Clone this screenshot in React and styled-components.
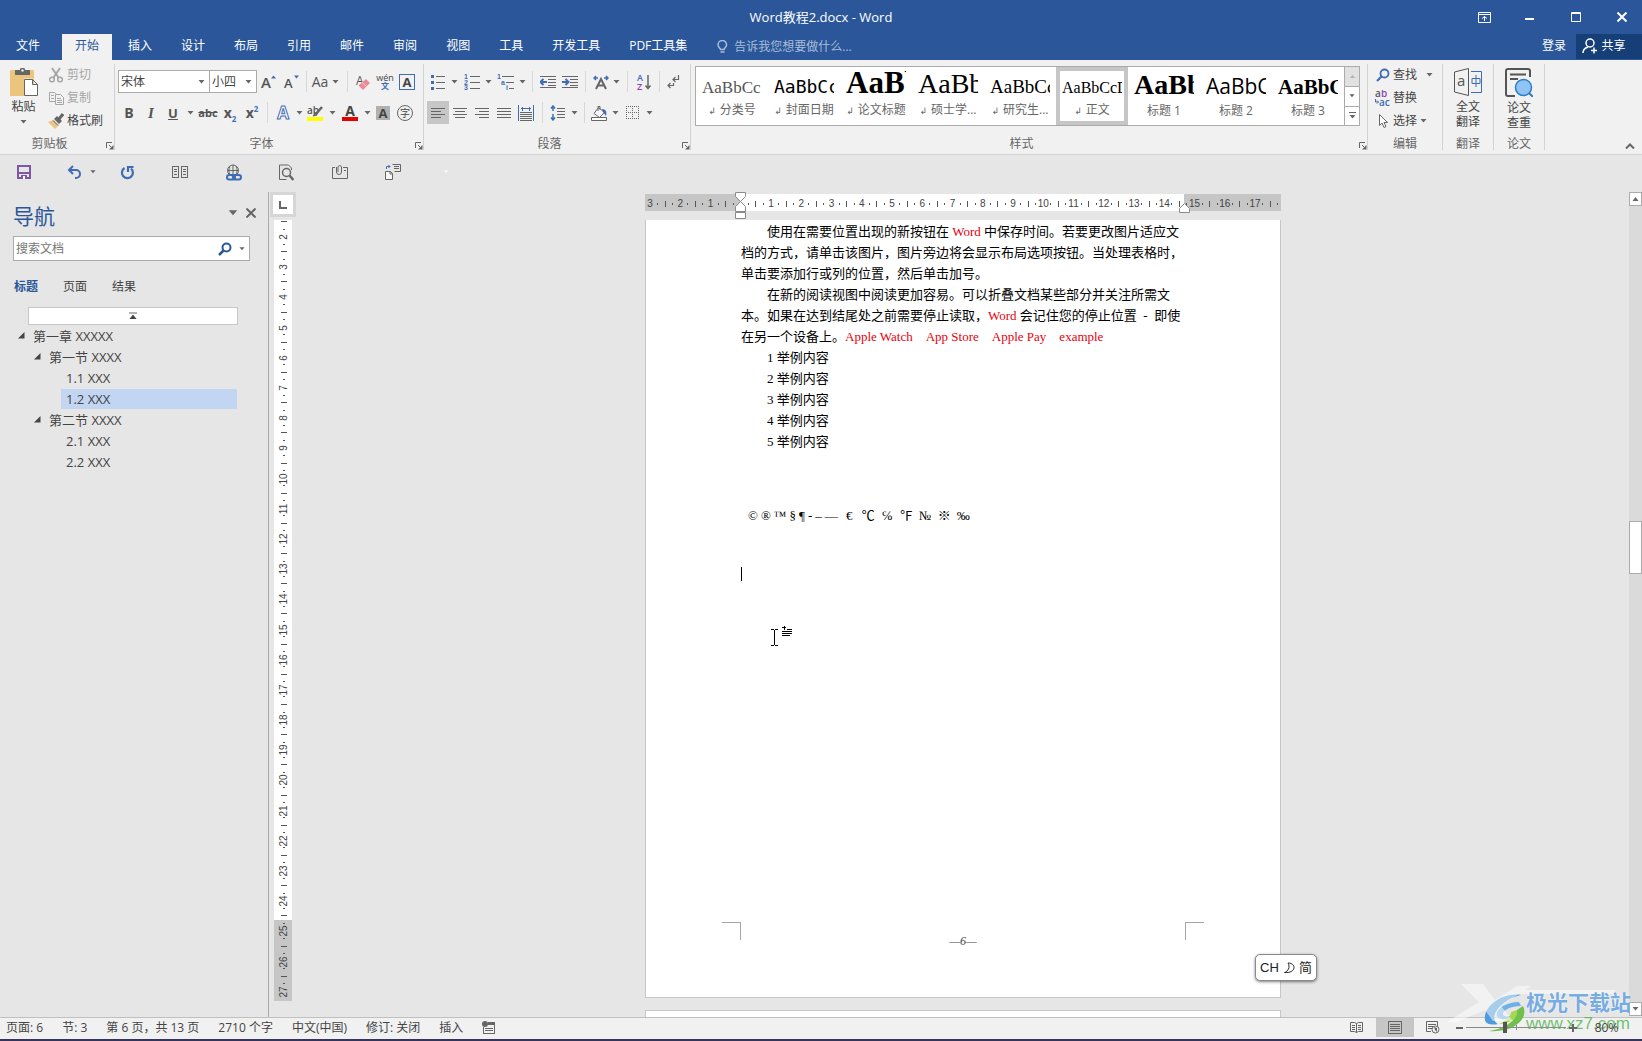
import React, { useState } from 'react';
import styled, { createGlobalStyle, css } from 'styled-components';

const GlobalStyle = createGlobalStyle`
  * {
    box-sizing: border-box;
  }
  body {
    margin: 0;
    background: #e6e6e6;
    color: #444444;
    font-family: 'Open Sans', 'Noto Sans CJK SC', sans-serif;
    font-size: 12px;
    line-height: 16px;
    overflow: hidden;
  }
  button, input, select {
    font: inherit;
    color: inherit;
    margin: 0;
  }
  svg {
    display: block;
    flex: none;
  }
`;

const Window = styled.div`
  display: flex;
  flex-direction: column;
  height: 100vh;
  position: relative;
  border-bottom: 2px solid #34345c;
`;

const PlainButton = styled.button`
  display: flex;
  align-items: center;
  justify-content: center;
  padding: 0;
  border: none;
  background: none;
  cursor: pointer;
  white-space: nowrap;
`;

/* ---------- title bar and tabs ---------- */

const TitleBar = styled.header`
  display: grid;
  grid-template-columns: 1fr auto 1fr;
  align-items: center;
  height: 34px;
  background: #2b579a;
  color: #ffffff;
`;

const Title = styled.h1`
  grid-column: 2;
  margin: 0;
  font-size: 13px;
  font-weight: 400;
`;

const WindowButtons = styled.div`
  display: flex;
  justify-content: flex-end;
`;

const WindowButton = styled(PlainButton)`
  width: 46px;
  height: 30px;

  &:last-child {
    width: 40px;
    margin-left: 3px;
  }
`;

const TabBar = styled.nav`
  display: flex;
  align-items: stretch;
  gap: 3px;
  height: 26px;
  background: #2b579a;
  color: #ffffff;
`;

const Tab = styled(PlainButton)`
  padding: 0 13px 3px;
  ${(p) => p.$file && css`
    padding: 0 19px 3px 16px;
  `}
  ${(p) => p.$account && css`
    padding: 0 7px 3px;
  `}
  ${(p) => p.$active && css`
    background: #f1f1f1;
    color: #2b579a;
  `}
`;

const TellMe = styled.label`
  display: flex;
  align-items: center;
  gap: 6px;
  flex: 1;
  padding-left: 14px;
  color: #a9bcd9;

  input {
    flex: 1;
    padding: 0;
    border: none;
    outline: none;
    background: none;
  }
  input::placeholder {
    color: #a9bcd9;
  }
`;

const ShareButton = styled(PlainButton)`
  gap: 3px;
  width: 66px;
  margin-bottom: 1px;
  padding: 0 10px 2px 0;
  background: #163f78;
`;

/* ---------- ribbon ---------- */

const Ribbon = styled.div`
  display: flex;
  height: 95px;
  background: #f1f1f1;
  border-bottom: 1px solid #d2d2d2;
`;

const Group = styled.section`
  display: flex;
  flex: none;
  flex-direction: column;
  position: relative;
  width: ${(p) => p.$w}px;
  padding: 0 4px 0 3px;

  &::after {
    content: '';
    position: absolute;
    right: 0;
    top: 4px;
    bottom: 4px;
    width: 1px;
    background: #d2d2d2;
  }
`;

const GroupBody = styled.div`
  display: flex;
  flex: 1;
  flex-direction: ${(p) => (p.$column ? 'column' : 'row')};
  gap: ${(p) => p.$gap || 0}px;
  padding-top: ${(p) => p.$top || 0}px;
`;

const GroupFooter = styled.div`
  display: flex;
  align-items: center;
  gap: 10px;
  height: 20px;
  text-align: center;
  color: #666666;
  white-space: nowrap;

  span {
    flex: 1;
  }
  svg {
    margin: 4px -3px 0 0;
  }
`;

const ToolRow = styled.div`
  display: flex;
  align-items: center;
  height: 23px;
`;

const Tool = styled(PlainButton)`
  width: ${(p) => p.$w || 22}px;
  height: 23px;
  font-size: ${(p) => p.$size || 15}px;
  background: ${(p) => (p.$active ? '#c6c6c6' : 'none')};

  &:hover {
    background: #d5e1f2;
  }
`;

const Divider = styled.span`
  width: ${(p) => p.$w || 10}px;
  height: 21px;
  background: linear-gradient(#d8d8d8, #d8d8d8) center / 1px 100% no-repeat;
`;

const ComboBox = styled.div`
  display: grid;
  align-items: center;
  width: ${(p) => p.$w}px;
  height: 23px;
  border: 1px solid #ababab;
  background: #ffffff;

  & + & {
    border-left: none;
  }
  select, svg {
    grid-area: 1 / 1;
  }
  select {
    width: 100%;
    padding: 0 2px;
    border: none;
    outline: none;
    appearance: none;
    background: none;
  }
  svg {
    justify-self: end;
    margin-right: 4px;
    pointer-events: none;
  }
`;

const BigButton = styled(PlainButton)`
  flex-direction: column;
  justify-content: flex-start;
  width: ${(p) => p.$w || 44}px;
  padding-top: 8px;
  line-height: 15px;
  white-space: normal;

  svg:first-child {
    margin-bottom: 3px;
  }
  span + svg {
    margin-top: 6px;
  }
`;

const CommandList = styled.div`
  display: flex;
  flex: 1;
  flex-direction: column;
  padding-top: 3px;
`;

const Command = styled(PlainButton)`
  justify-content: flex-start;
  gap: 3px;
  height: 23px;
  color: ${(p) => (p.disabled ? '#a6a6a6' : '#444444')};
`;

/* ---------- style gallery ---------- */

const Gallery = styled.div`
  display: flex;
  height: 60px;
  margin-left: 1px;
  border: 1px solid #ababab;
  background: #ffffff;
`;

const StyleCard = styled.button`
  width: 72px;
  height: 58px;
  padding: 6px 6px 5px;
  border: none;
  background: #ffffff;
  box-shadow: ${(p) => (p.$selected ? 'inset 0 0 0 4px #c6c6c6' : 'none')};
  text-align: center;
  color: #666666;
  line-height: 15px;
  white-space: nowrap;
  cursor: pointer;
`;

const Preview = styled.div`
  height: 28px;
  font-family: 'Liberation Serif', serif;
  font-size: 16px;
  line-height: 28px;
  text-align: left;
  color: #000000;
  overflow-x: clip;
`;

const Sample = styled.span`
  font-family: ${(p) => p.$font || "'Liberation Serif', serif"};
  font-size: ${(p) => p.$size}px;
  font-weight: ${(p) => (p.$bold ? 700 : 400)};
  color: ${(p) => p.$color || '#000000'};
  line-height: 1px;
`;

const ReturnMark = styled.span`
  margin-right: 4px;
  font-family: 'DejaVu Sans', sans-serif;
  font-size: 9px;
`;

const GalleryScroll = styled.div`
  display: grid;
  grid-template-rows: 1fr 1fr 1fr;
  width: 15px;
  border-left: 1px solid #ababab;
`;

const GalleryArrow = styled(PlainButton)`
  & + & {
    border-top: 1px solid #ababab;
  }
  &:disabled {
    background: #e1e1e1;
  }
`;

const Collapse = styled(PlainButton)`
  align-self: flex-end;
  margin-left: auto;
  width: 24px;
  height: 16px;
`;

/* ---------- quick access ---------- */

const QuickBar = styled.div`
  display: flex;
  align-items: center;
  height: 37px;
  padding-bottom: 3px;
`;

const QuickButton = styled(PlainButton)`
  gap: 9px;
  width: 53px;
  height: 24px;

  &:first-child {
    width: 48px;
  }
  &:nth-child(2) {
    padding-left: 14px;
  }
`;

/* ---------- navigation pane ---------- */

const Workspace = styled.main`
  display: flex;
  flex: 1;
  min-height: 0;
`;

const NavPane = styled.aside`
  display: flex;
  flex-direction: column;
  width: 269px;
  padding: 8px 18px 0 13px;
  border-right: 1px solid #ababab;
`;

const NavHeader = styled.div`
  display: flex;
  align-items: center;
  height: 32px;
  margin-right: -10px;

  h2 {
    flex: 1;
    margin: 0;
    font-size: 21px;
    font-weight: 400;
    color: #2b579a;
  }
  button {
    width: 18px;
    height: 18px;
    margin-bottom: 6px;
  }
`;

const SearchBox = styled.div`
  display: flex;
  align-items: center;
  gap: 7px;
  width: 237px;
  height: 25px;
  margin-top: 4px;
  padding: 0 4px 0 2px;
  border: 1px solid #ababab;
  background: #ffffff;

  input {
    flex: 1;
    min-width: 0;
    padding: 0;
    border: none;
    outline: none;
  }
  input::placeholder {
    color: #767676;
  }
`;

const NavTabs = styled.div`
  display: flex;
  gap: 25px;
  margin-top: 17px;
  padding-left: 1px;
`;

const NavTab = styled(PlainButton)`
  line-height: 18px;
  font-weight: ${(p) => (p.$active ? 700 : 400)};
  color: ${(p) => (p.$active ? '#2b579a' : '#444444')};
`;

const JumpTop = styled(PlainButton)`
  width: 210px;
  height: 18px;
  margin: 11px 0 0 15px;
  border: 1px solid #c6c6c6;
  background: #ffffff;
`;

const Tree = styled.ul`
  margin: 0;
  padding: 0;
  list-style: none;
  font-size: 13px;
`;

const TreeItem = styled.li`
  display: flex;
  align-items: center;
  height: 21px;
  padding-left: ${(p) => p.$level * 16 - 11}px;

  button {
    justify-content: flex-start;
    gap: 8px;
  }
`;

const LeafButton = styled(PlainButton)`
  flex: 1;
  height: 20px;
  margin: 0 13px 0 11px;
  padding-left: 5px;
  background: ${(p) => (p.$selected ? '#c2d5f2' : 'none')};
`;

/* ---------- rulers ---------- */

const SideRulerColumn = styled.div`
  display: flex;
  flex-direction: column;
  align-items: center;
  width: 28px;
  padding-bottom: 16px;
`;

const TabSelector = styled(PlainButton)`
  width: 26px;
  height: 25px;
  margin-bottom: 3px;
  border: 3px solid #d6d6d6;
  background: #ffffff;
`;

const rulerBase = css`
  display: flex;
  align-items: center;
  justify-content: space-between;
  font-family: 'Liberation Sans', sans-serif;
  font-size: 10px;
  line-height: 12px;
  color: #444444;
`;

const SideRuler = styled.div`
  ${rulerBase}
  flex: 1;
  flex-direction: column;
  width: 18px;
  padding: 2px 0 8px 1px;
  background: linear-gradient(#ffffff 700px, #c6c6c6 700px);
`;

const TopRuler = styled.div`
  ${rulerBase}
  position: relative;
  flex: none;
  width: 636px;
  height: 17px;
  margin: 2px 0 9px;
  padding: 2px 3px 0 5px;
  background: linear-gradient(90deg, #c6c6c6 95px, #ffffff 95px, #ffffff 539px, #c6c6c6 539px);
`;

const Mark = styled.span`
  display: flex;
  align-items: center;
  justify-content: center;
  width: 0;
  height: ${(p) => (p.$side ? '0' : '12px')};
  transform: ${(p) => (p.$side ? 'rotate(-90deg)' : 'none')};
`;

const Tick = styled.i`
  flex: none;
  width: 1px;
  height: ${(p) => (p.$half ? 6 : 2)}px;
  background: #555555;
`;

const IndentMarker = styled.span`
  position: absolute;
  left: 90px;
  top: -2px;
`;

const RightMarker = styled.span`
  position: absolute;
  left: 534px;
  top: 9px;
`;

/* ---------- document ---------- */

const Canvas = styled.div`
  display: flex;
  flex: 1;
  flex-direction: column;
  align-items: center;
  position: relative;
  overflow: hidden;
`;

const Page = styled.article`
  display: flex;
  flex: none;
  flex-direction: column;
  width: 636px;
  min-height: ${(p) => (p.$next ? 60 : 778)}px;
  border: 1px solid #c6c6c6;
  border-top-width: ${(p) => (p.$next ? 1 : 0)}px;
  background: #ffffff;
  color: #000000;
  font-family: 'Liberation Serif', 'Noto Sans CJK SC', serif;
  font-size: 13px;
  line-height: 21px;
  white-space: pre;

  & + & {
    margin-top: 12px;
  }
`;

const PageBody = styled.div`
  padding: 1px 95px 0;
`;

const Paragraph = styled.p`
  margin: 0;
  text-indent: 26px;
`;

const Red = styled.span`
  color: #e8000c;
`;

const Examples = styled.ul`
  margin: 0;
  padding: 0 0 0 26px;
  list-style: none;
`;

const Symbols = styled.div`
  display: flex;
  gap: ${(p) => (p.$wide ? 6 : 3)}px;

  span {
    min-width: ${(p) => (p.$wide ? 13 : 0)}px;
    text-align: center;
  }
`;

const SymbolLine = styled.div`
  display: flex;
  gap: 5px;
  margin-top: 53px;
  padding-left: 7px;
`;

const Caret = styled.div`
  width: 1px;
  height: 14px;
  margin-top: 41px;
  background: #000000;
`;

const PageFooter = styled.footer`
  display: flex;
  justify-content: space-between;
  margin-top: auto;
  padding: 0 76px 47px;
`;

const CropMark = styled.span`
  width: 19px;
  height: 18px;
  border-top: 1px solid #a6a6a6;
  border-left: ${(p) => (p.$right ? '1px solid #a6a6a6' : 'none')};
  border-right: ${(p) => (p.$right ? 'none' : '1px solid #a6a6a6')};
`;

const PageNumber = styled.span`
  padding-top: 10px;
  font-size: 12px;
  line-height: 18px;
  font-style: italic;
  color: #444444;
`;

const MousePointer = styled.div`
  position: absolute;
  left: 474px;
  top: 434px;
`;

const ScrollBar = styled.div`
  display: flex;
  flex-direction: column;
  width: 13px;
  margin-bottom: 1px;
  background: #dadada;
`;

const ScrollArrow = styled(PlainButton)`
  height: 14px;
  border: 1px solid #ababab;
  background: #ffffff;
`;

const ScrollThumb = styled.div`
  height: 53px;
  margin-top: 315px;
  margin-bottom: auto;
  border: 1px solid #ababab;
  background: #ffffff;
`;

/* ---------- status bar ---------- */

const StatusBar = styled.footer`
  display: flex;
  align-items: center;
  height: 22px;
  padding: 0 0 2px 6px;
  border-top: 1px solid #c0c0c0;
  background: #f1f1f1;
`;

const StatusItems = styled.div`
  display: flex;
  flex: 1;
  align-items: center;
  gap: 19px;
`;

const ViewButton = styled(PlainButton)`
  width: 38px;
  height: 19px;
  background: ${(p) => (p.$active ? '#c6c6c6' : 'none')};
`;

const ZoomControls = styled.div`
  display: flex;
  align-items: center;
  position: relative;
  z-index: 1;
`;

const ZoomStep = styled(PlainButton)`
  width: 14px;
  height: 20px;
`;

const ZoomSlider = styled.input`
  width: 100px;
  height: 16px;
  appearance: none;
  background: linear-gradient(#8a8a8a, #8a8a8a) center / 100% 1px no-repeat,
    linear-gradient(#8a8a8a, #8a8a8a) center / 1px 5px no-repeat;

  &::-webkit-slider-thumb {
    appearance: none;
    width: 4px;
    height: 11px;
    background: #555555;
  }
`;

const ZoomValue = styled(PlainButton)`
  width: 62px;
  height: 20px;
  padding-right: 9px;
`;

const ImeBadge = styled.div`
  position: absolute;
  right: 325px;
  bottom: 58px;
  display: flex;
  align-items: center;
  justify-content: center;
  gap: 4px;
  width: 62px;
  height: 27px;
  border: 1px solid #8a8a8a;
  border-radius: 5px;
  background: #ffffff;
  box-shadow: 0 1px 3px rgba(0, 0, 0, 0.5);
  color: #222222;
  font-family: 'Liberation Sans', 'Noto Sans CJK SC', sans-serif;
  font-size: 13px;
`;

const Watermark = styled.div`
  position: absolute;
  right: 11px;
  bottom: 5px;
  display: flex;
  align-items: flex-end;
  gap: 1px;
  pointer-events: none;
`;

const WatermarkGlow = styled.svg`
  position: absolute;
  right: 0;
  bottom: 12px;
`;

const WatermarkText = styled.div`
  position: relative;
  font-family: 'Noto Sans CJK SC', sans-serif;
  font-size: 21px;
  line-height: 26px;
  font-weight: 700;
  color: rgba(94, 158, 222, 0.85);
  text-shadow: 0 0 2px #ffffff;

  small {
    display: block;
    font-family: 'Liberation Sans', sans-serif;
    font-size: 17px;
    line-height: 20px;
    font-weight: 400;
    color: rgba(86, 184, 86, 0.85);
    text-shadow: none;
  }
`;

/* ---------- icons ---------- */

const GREY = '#666666';
const BLUE = '#3e6db5';

const Icon = ({ w = 16, h = 16, children, ...rest }) => (
  <svg width={w} height={h} viewBox={`0 0 ${w} ${h}`} fill="none" stroke={GREY} aria-hidden="true" {...rest}>
    {children}
  </svg>
);

const Down = ({ color = GREY, w = 7 }) => (
  <svg width={w} height={Math.round(w * 0.6)} viewBox="0 0 7 4" aria-hidden="true">
    <path d="M0.500 0h6L3.500 3.600z" fill={color} />
  </svg>
);

const Launcher = () => (
  <Icon w={8} h={8}>
    <path d="M0.500 6V0.500H6M3 3l3 3" />
    <path d="M7.500 3v4.500H3z" fill={GREY} stroke="none" />
  </Icon>
);

const Lines = ({ rows }) => (
  <Icon w={16} h={14} shapeRendering="crispEdges">
    {rows.map(([x1, x2], i) => (
      <path key={i} d={`M${x1} ${2.5 + i * 3}H${x2}`} />
    ))}
  </Icon>
);

const Glyph = styled.span`
  font-family: ${(p) => (p.$serif ? "'Liberation Serif', serif" : "'Open Sans', sans-serif")};
  font-weight: ${(p) => (p.$light ? 400 : 700)};
  font-style: ${(p) => (p.$italic ? 'italic' : 'normal')};
  text-decoration: ${(p) => p.$line || 'none'};
  font-size: ${(p) => p.$size || 14}px;
  line-height: 16px;
  color: #555555;

  sub, sup {
    font-size: 8px;
    line-height: 0;
    color: ${BLUE};
  }
`;

const FramedLetter = styled.span`
  width: 16px;
  height: 16px;
  border: 1px solid ${BLUE};
  font-size: 13px;
  line-height: 14px;
  font-weight: 700;
`;

const ShadedLetter = styled.span`
  width: 14px;
  height: 14px;
  background: #b0b0b0;
  font-size: 13px;
  line-height: 14px;
  font-weight: 700;
`;

const CircledCharacter = styled.span`
  width: 16px;
  height: 16px;
  border: 1px solid ${GREY};
  border-radius: 8px;
  font-size: 10px;
  line-height: 14px;
`;

const Pinyin = styled.span`
  font-size: 9px;
  line-height: 8px;

  b {
    display: block;
    color: ${BLUE};
    font-size: 8px;
  }
`;

const ColorLetter = styled.span`
  width: 16px;
  border-bottom: 4px solid ${(p) => p.$color};
  font-size: 14px;
  line-height: 13px;
  font-weight: 700;
`;

const OutlinedLetter = styled.span`
  color: #ffffff;
  font-size: 17px;
  font-weight: 700;
  -webkit-text-stroke: 1px ${BLUE};
`;

const PasteIcon = () => (
  <Icon w={28} h={28}>
    <rect x="0" y="2" width="24" height="26" rx="1" fill="#ecc57c" stroke="none" />
    <path d="M5 2h5a2.500 2.500 0 0 1 5 0h5v5H5z" fill="#666666" stroke="none" />
    <circle cx="12.500" cy="2.500" r="1.200" fill="#f1f1f1" stroke="none" />
    <path d="M14 10.500h9v17h-9z" fill="#f1f1f1" stroke="none" />
    <path d="M14.500 11.500h8l5 5v11h-13zM22.500 11.500v5h5" fill="#ffffff" />
  </Icon>
);

const CutIcon = () => (
  <Icon stroke="#a6a6a6" strokeWidth="1.500">
    <path d="M4 1l6.500 9.500M12 1L5.500 10.500" strokeWidth="2" />
    <circle cx="4" cy="12.500" r="2.300" />
    <circle cx="12" cy="12.500" r="2.300" />
  </Icon>
);

const CopyIcon = () => (
  <Icon stroke="#a6a6a6">
    <path d="M7 11.500H1.500v-9h5l2 2M3 5.500h3M3 8.500h3" />
    <path d="M7.500 4.500h5l3 3v7h-8zM9 8.500h4M9 10.500h5M9 12.500h5" fill="#f1f1f1" />
  </Icon>
);

const BrushIcon = () => (
  <Icon>
    <path d="M0 9l6-2 5 5-4 4z" fill="#ecc57c" stroke="none" />
    <path d="M6 6l3-3 5 5-3 3z" fill="#666666" stroke="none" />
    <path d="M11 6l4-5" strokeWidth="3" />
    <path d="M5 7.500l5 5" stroke="#4472b5" />
  </Icon>
);

const LetterSize = ({ up }) => (
  <Icon w={18} h={16}>
    <text x="1" y="14" fontSize={up ? 15 : 13} fontWeight="600" fontFamily="Open Sans" fill="#555555" stroke="none">A</text>
    <path d={up ? 'M11 4.500h5L13.500 1.500z' : 'M11 1.500h5L13.500 4.500z'} fill={BLUE} stroke="none" />
  </Icon>
);

const EraserIcon = () => (
  <Icon>
    <text x="1" y="11" fontSize="12" fontFamily="Open Sans" fill="#555555" stroke="none">A</text>
    <path d="M3.500 11.500l7.500-6.500 4 4-7 7z" fill="#e98b97" stroke="none" />
    <path d="M7 8.500l4.500 4" stroke="#f7cdd2" />
  </Icon>
);

const HighlightIcon = () => (
  <Icon>
    <text x="0" y="9" fontSize="10" fontWeight="600" fontFamily="Open Sans" fill="#555555" stroke="none">ab</text>
    <path d="M15 2L8 10" strokeWidth="2.500" />
    <path d="M9 7l-3 4 4-1z" fill={GREY} />
    <path d="M0 12h16v4H0z" fill="#ffff00" stroke="none" />
  </Icon>
);

const BulletsIcon = () => (
  <Icon shapeRendering="crispEdges">
    <path d="M6 2.500h9M6 8.500h9M6 14.500h9" />
    <path d="M1 1h3v3H1zM1 7h3v3H1zM1 13h3v3H1z" fill={BLUE} stroke="none" />
  </Icon>
);

const NumberingIcon = () => (
  <Icon>
    <path d="M6 2.500h10M6 8.500h10M6 14.500h10" shapeRendering="crispEdges" />
    <g fill={BLUE} stroke="none" fontSize="7" fontWeight="700" fontFamily="Liberation Sans">
      <text x="0" y="5">1</text>
      <text x="0" y="11">2</text>
      <text x="0" y="16">3</text>
    </g>
  </Icon>
);

const MultilevelIcon = () => (
  <Icon w={17}>
    <path d="M5 2.500h12M9 8.500h8M12 14.500h5" shapeRendering="crispEdges" />
    <g fill={BLUE} stroke="none" fontSize="7" fontWeight="700" fontFamily="Liberation Sans">
      <text x="0" y="5">1</text>
      <text x="4" y="11">a</text>
      <text x="9" y="16">i</text>
    </g>
  </Icon>
);

const IndentIcon = ({ right }) => (
  <Icon>
    <path d="M0 2.500h16M8 5.500h8M8 8.500h8M8 11.500h8M0 13.500h16" shapeRendering="crispEdges" />
    <path d={right ? 'M0 8h6M3.500 5L6.500 8l-3 3' : 'M7 8H1M3.500 5L0.500 8l3 3'} stroke={BLUE} strokeWidth="2" />
  </Icon>
);

const AsianLayoutIcon = () => (
  <Icon>
    <path d="M3 15L8 5l5 10M5 11.500h6" strokeWidth="2" />
    <path d="M5 4H1M3 2L1 4l2 2M11 4h4M13 2l2 2-2 2" stroke={BLUE} strokeWidth="1.500" />
  </Icon>
);

const SortIcon = () => (
  <Icon>
    <g stroke="none" fontSize="9" fontWeight="600" fontFamily="Open Sans">
      <text x="1" y="7" fill={BLUE}>A</text>
      <text x="1" y="16" fill="#8e44ad">Z</text>
    </g>
    <path d="M12 1v13M9.500 11.500L12 14.500l2.500-3" strokeWidth="1.500" />
  </Icon>
);

const MarksIcon = () => (
  <Icon w={14} h={14}>
    <path d="M11.500 0v4.500H6M8.500 2L6 4.500 8.500 7" strokeWidth="1.200" />
    <path d="M6.500 8v2.500H1M3.500 8L1 10.500 3.500 13" strokeWidth="1.200" />
  </Icon>
);

const DistributeIcon = () => (
  <Icon shapeRendering="crispEdges">
    <path d="M0.500 0v16M15.500 0v16M3 3.500h10M4.500 1.500v4M11.500 1.500v4" stroke={BLUE} />
    <path d="M2 7.500h12M2 9.500h12M2 11.500h12M2 13.500h12M2 15.500h12" />
  </Icon>
);

const SpacingIcon = () => (
  <Icon>
    <path d="M7 3.500h8M7 6.500h8M7 9.500h8M7 12.500h8" shapeRendering="crispEdges" />
    <path d="M3 1v5M1 3.500L3 1l2 2.500M3 9v6M1 12.500L3 15l2-2.500" stroke={BLUE} strokeWidth="1.500" />
  </Icon>
);

const BucketIcon = () => (
  <Icon>
    <path d="M7.500 2.500l6 5-5 5-5.500-4zM7 6V1.500h2V5" fill="#f7f7f7" />
    <path d="M11 4c4 0 5 3 4 7l-3-4z" fill={BLUE} stroke="none" />
    <path d="M0.500 12.500h15v3H0.500z" fill="#ffffff" />
  </Icon>
);

const BordersIcon = () => (
  <Icon w={14} h={14} strokeDasharray="1 1" shapeRendering="crispEdges">
    <path d="M0 0.500h13M0 6.500h13M0 12.500h13M0.500 0v13M6.500 0v13M12.500 0v13" />
  </Icon>
);

const Magnifier = ({ size = 14, color = '#2b579a' }) => (
  <svg width={size} height={size} viewBox="0 0 14 14" fill="none" stroke={color} strokeWidth="2" aria-hidden="true">
    <circle cx="8.500" cy="5.500" r="4" />
    <path d="M5.500 8.500L1 13" strokeWidth="2.500" />
  </svg>
);

const FindIcon = () => (
  <Icon w={19} stroke={BLUE}>
    <circle cx="13.500" cy="6.500" r="4" strokeWidth="1.800" />
    <path d="M10.500 9.500L6 14" strokeWidth="2.200" />
  </Icon>
);

const ReplaceIcon = () => (
  <Icon w={19} stroke="none" fontFamily="Open Sans" fontSize="10" fontWeight="600">
    <text x="4" y="7" fill="#555555">a</text>
    <text x="10" y="7" fill="#8e44ad">b</text>
    <text x="8" y="16" fill={BLUE}>ac</text>
    <path d="M4.500 9v3h3M6 10.500L7.500 12 6 13.500" stroke={BLUE} fill="none" />
  </Icon>
);

const SelectIcon = () => (
  <Icon w={19}>
    <path d="M8.500 1.500v11l2.500-2.500 2 4.500 2-1-2-4h3.500z" fill="#ffffff" />
  </Icon>
);

const TranslateIcon = () => (
  <Icon w={28} h={28}>
    <path d="M0.500 4L14.500 0.500v27L0.500 24z" stroke="#555555" />
    <path d="M17 3.500h10.500V24.500H17M18 10.500h8v5h-8zM22 7v12" stroke={BLUE} />
    <text x="3" y="18" fontSize="15" fontFamily="Open Sans" fill="#555555" stroke="none">a</text>
  </Icon>
);

const ThesisIcon = () => (
  <Icon w={28} h={29}>
    <path d="M10 28H3a2 2 0 0 1-2-2V3a2 2 0 0 1 2-2h20a2 2 0 0 1 2 2v6M5 6.500h16M5 11h8" stroke="#555555" strokeWidth="2" />
    <circle cx="18.500" cy="19.500" r="8" fill="#8fc5f4" stroke="#2e7cc2" strokeWidth="1.500" />
    <path d="M24 25l4 4" stroke="#2e7cc2" strokeWidth="2" />
  </Icon>
);

const quickItems = [
  {
    name: '保存',
    icon: (
      <Icon w={14} h={14} stroke="#7e57a5" strokeWidth="2">
        <path d="M1 1h12v12H1zM1 8h12" />
        <path d="M4 10h6v4H4z" fill="#7e57a5" stroke="none" />
        <path d="M6 11h2v3H6z" fill="#ffffff" stroke="none" />
      </Icon>
    ),
  },
  {
    name: '撤消',
    menu: true,
    icon: (
      <Icon w={14} h={14} stroke={BLUE} strokeWidth="2">
        <path d="M2 5h7a3.800 3.800 0 0 1 0 8H8M6 1L2 5l4 4" />
      </Icon>
    ),
  },
  {
    name: '重复',
    icon: (
      <Icon w={15} h={15} stroke={BLUE} strokeWidth="2.200">
        <path d="M4.500 3A5.500 5.500 0 1 0 11 3.500" />
        <path d="M8 7V2h5.500" />
      </Icon>
    ),
  },
  {
    name: '并排',
    icon: (
      <Icon w={17} h={12} shapeRendering="crispEdges">
        <path d="M0.500 0.500h6v11h-6zM9.500 0.500h6v11h-6zM2 3.500h3M2 5.500h3M2 8.500h3M11 3.500h3M11 5.500h3M11 8.500h3" />
      </Icon>
    ),
  },
  {
    name: '超链接',
    icon: (
      <Icon w={16} h={17}>
        <circle cx="7" cy="6.500" r="5.500" />
        <path d="M7 1v9M1.500 6.500h11M4 2.500c-1.500 3-1.500 5 0 8M10 2.500c1.500 3 1.500 5 0 8" />
        <rect x="1" y="11" width="8" height="4.500" rx="2.200" stroke={BLUE} strokeWidth="2" />
        <rect x="7" y="11" width="8" height="4.500" rx="2.200" stroke={BLUE} strokeWidth="2" />
      </Icon>
    ),
  },
  {
    name: '打印预览',
    icon: (
      <Icon w={15} h={17}>
        <path d="M12.500 6V4l-3-3h-9v14.500h7" />
        <circle cx="7.500" cy="8.500" r="4" strokeWidth="1.500" />
        <path d="M10.500 11.500l4 4.500" strokeWidth="2.500" />
      </Icon>
    ),
  },
  {
    name: '附件',
    icon: (
      <Icon w={16} h={16}>
        <path d="M3 3.500H0.500v11h15v-11H11M12 6.500h2" />
        <path d="M4.500 3v5a2.500 2.500 0 0 0 5 0V3a1.800 1.800 0 0 0-3.500 0v5" />
      </Icon>
    ),
  },
  {
    name: '转换',
    icon: (
      <Icon w={16} h={16}>
        <path d="M0.500 7.500h5l2 2v6h-7zM5 7.500v2.500h2.500" fill="#f7f7f7" />
        <path d="M7.500 0.500h8v7h-6M9 2.500h5M9 4.500h5" />
        <path d="M1.500 5V2.500H5M3.500 1L5 2.500 3.500 4" stroke={BLUE} />
      </Icon>
    ),
  },
];

/* ---------- data ---------- */

const tabs = ['开始', '插入', '设计', '布局', '引用', '邮件', '审阅', '视图', '工具', '开发工具', 'PDF工具集'];

const styleCards = [
  { name: '分类号', sample: 'AaBbCc', size: 17, mark: true, color: '#555555' },
  { name: '封面日期', sample: 'AaBbCc', size: 18, mark: true, font: "'DejaVu Sans Mono', monospace" },
  { name: '论文标题', sample: 'AaBb', size: 31, mark: true, bold: true },
  { name: '硕士学...', sample: 'AaBb', size: 28, mark: true },
  { name: '研究生...', sample: 'AaBbCc', size: 19, mark: true },
  { name: '正文', sample: 'AaBbCcD', size: 16, mark: true },
  { name: '标题 1', sample: 'AaBb', size: 28, bold: true },
  { name: '标题 2', sample: 'AaBbC', size: 21, font: "'Open Sans', sans-serif" },
  { name: '标题 3', sample: 'AaBbC', size: 21, bold: true },
];

const headings = [
  { level: 1, text: '第一章 XXXXX' },
  { level: 2, text: '第一节 XXXX' },
  { level: 3, text: '1.1 XXX' },
  { level: 3, text: '1.2 XXX' },
  { level: 2, text: '第二节 XXXX' },
  { level: 3, text: '2.1 XXX' },
  { level: 3, text: '2.2 XXX' },
];

const examples = [1, 2, 3, 4, 5];

// Quarter-unit marks: a number, a dot, a half tick, a dot
const rulerMarks = (from, to) => {
  const marks = [];
  for (let q = from * 4; q <= to * 4; q += 1) {
    if (q % 4 === 0) marks.push({ q, label: q === 0 ? '' : String(Math.abs(q / 4)) });
    else marks.push({ q, half: q % 2 === 0 });
  }
  return marks;
};

const Scale = ({ from, to, side }) =>
  rulerMarks(from, to).map((m) => (
    <Mark key={m.q} $side={side}>
      {m.label === undefined ? <Tick $half={m.half} /> : m.label}
    </Mark>
  ));

function App() {
  const [activeTab, setActiveTab] = useState('开始');
  const [style, setStyle] = useState('正文');
  const [heading, setHeading] = useState('1.2 XXX');
  const [zoom, setZoom] = useState(39);

  return (
    <Window>
      <GlobalStyle />
      <TitleBar>
        <Title>Word教程2.docx - Word</Title>
        <WindowButtons>
          <WindowButton aria-label="功能区显示选项">
            <Icon w={13} h={11} stroke="#ffffff">
              <path d="M0.500 0.500h12v10h-12zM0.500 2.500h12M6.500 9V4.500M4 6.500l2.500-2 2.500 2" />
            </Icon>
          </WindowButton>
          <WindowButton aria-label="最小化">
            <Icon w={10} h={10} stroke="#ffffff"><path d="M0 7h9" strokeWidth="2" /></Icon>
          </WindowButton>
          <WindowButton aria-label="最大化">
            <Icon w={10} h={10} stroke="#ffffff"><path d="M0.500 0.500h9v9h-9zM0 1.500h10" /></Icon>
          </WindowButton>
          <WindowButton aria-label="关闭">
            <Icon w={10} h={10} stroke="#ffffff" strokeWidth="2"><path d="M0.500 0.500l9 9M9.500 0.500l-9 9" /></Icon>
          </WindowButton>
        </WindowButtons>
      </TitleBar>

      <TabBar>
        <Tab $file>文件</Tab>
        {tabs.map((t) => (
          <Tab key={t} $active={t === activeTab} onClick={() => setActiveTab(t)}>{t}</Tab>
        ))}
        <TellMe>
          <Icon w={11} h={14} stroke="#a9bcd9" strokeWidth="1.500">
            <path d="M3.500 9.500C3.500 8 1 7.500 1 4.800a4.300 4.300 0 0 1 8.600 0C9.600 7.500 7 8 7 9.500zM3.500 12h4" />
          </Icon>
          <input placeholder="告诉我您想要做什么..." aria-label="告诉我您想要做什么" />
        </TellMe>
        <Tab $account>登录</Tab>
        <ShareButton>
          <Icon w={16} h={16} stroke="#ffffff" strokeWidth="1.500">
            <circle cx="8" cy="5" r="4" />
            <path d="M1 15c0-3 2-5 5-6M9 12.500h6M12 9.500v6" />
          </Icon>
          共享
        </ShareButton>
      </TabBar>

      <Ribbon>
        <Group $w={115}>
          <GroupBody $gap={4}>
            <BigButton $w={41}><PasteIcon /><span>粘贴</span><Down /></BigButton>
            <CommandList>
              <Command disabled><CutIcon />剪切</Command>
              <Command disabled><CopyIcon />复制</Command>
              <Command><BrushIcon />格式刷</Command>
            </CommandList>
          </GroupBody>
          <GroupFooter><span>剪贴板</span><Launcher /></GroupFooter>
        </Group>

        <Group $w={309}>
          <GroupBody $column $gap={8} $top={10}>
            <ToolRow>
              <ComboBox $w={92}>
                <select aria-label="字体"><option>宋体</option></select>
                <Down />
              </ComboBox>
              <ComboBox $w={47}>
                <select aria-label="字号"><option>小四</option></select>
                <Down />
              </ComboBox>
              <Tool $w={24} aria-label="增大字号"><LetterSize up /></Tool>
              <Tool $w={22} aria-label="减小字号"><LetterSize /></Tool>
              <Divider $w={6} />
              <Tool $w={33}><Glyph $light $size={14}>Aa</Glyph>&nbsp;<Down /></Tool>
              <Divider />
              <Tool aria-label="清除格式"><EraserIcon /></Tool>
              <Tool aria-label="拼音指南"><Pinyin>wén<b>文</b></Pinyin></Tool>
              <Tool aria-label="字符边框"><FramedLetter>A</FramedLetter></Tool>
            </ToolRow>
            <ToolRow>
              <Tool><Glyph>B</Glyph></Tool>
              <Tool><Glyph $serif $italic $size={15}>I</Glyph></Tool>
              <Tool><Glyph $line="underline" $size={13}>U</Glyph></Tool>
              <Tool $w={13} aria-label="下划线"><Down /></Tool>
              <Tool><Glyph $line="line-through" $size={11}>abc</Glyph></Tool>
              <Tool><Glyph>x<sub>2</sub></Glyph></Tool>
              <Tool><Glyph>x<sup>2</sup></Glyph></Tool>
              <Divider $w={9} />
              <Tool><OutlinedLetter>A</OutlinedLetter></Tool>
              <Tool $w={10} aria-label="文本效果"><Down /></Tool>
              <Tool aria-label="突出显示"><HighlightIcon /></Tool>
              <Tool $w={12} aria-label="突出显示颜色"><Down /></Tool>
              <Tool $w={24}><ColorLetter $color="#e60000">A</ColorLetter></Tool>
              <Tool $w={10} aria-label="字体颜色"><Down /></Tool>
              <Tool><ShadedLetter>A</ShadedLetter></Tool>
              <Tool><CircledCharacter>字</CircledCharacter></Tool>
            </ToolRow>
          </GroupBody>
          <GroupFooter><span>字体</span><Launcher /></GroupFooter>
        </Group>

        <Group $w={267}>
          <GroupBody $column $gap={8} $top={10}>
            <ToolRow>
              <Tool aria-label="项目符号"><BulletsIcon /></Tool>
              <Tool $w={11} aria-label="项目符号库"><Down /></Tool>
              <Tool $w={23} aria-label="编号"><NumberingIcon /></Tool>
              <Tool $w={11} aria-label="编号库"><Down /></Tool>
              <Tool $w={23} aria-label="多级列表"><MultilevelIcon /></Tool>
              <Tool $w={10} aria-label="列表库"><Down /></Tool>
              <Divider />
              <Tool aria-label="减少缩进量"><IndentIcon /></Tool>
              <Tool aria-label="增加缩进量"><IndentIcon right /></Tool>
              <Divider $w={9} />
              <Tool aria-label="中文版式"><AsianLayoutIcon /></Tool>
              <Tool $w={9} aria-label="中文版式选项"><Down /></Tool>
              <Divider $w={12} />
              <Tool aria-label="排序"><SortIcon /></Tool>
              <Divider $w={8} />
              <Tool aria-label="显示编辑标记"><MarksIcon /></Tool>
            </ToolRow>
            <ToolRow>
              <Tool $active aria-label="左对齐"><Lines rows={[[1, 15], [1, 11], [1, 15], [1, 11]]} /></Tool>
              <Tool aria-label="居中"><Lines rows={[[1, 15], [3, 13], [1, 15], [3, 13]]} /></Tool>
              <Tool aria-label="右对齐"><Lines rows={[[1, 15], [5, 15], [1, 15], [5, 15]]} /></Tool>
              <Tool aria-label="两端对齐"><Lines rows={[[1, 15], [1, 15], [1, 15], [1, 15]]} /></Tool>
              <Tool aria-label="分散对齐"><DistributeIcon /></Tool>
              <Divider />
              <Tool aria-label="行距"><SpacingIcon /></Tool>
              <Tool $w={11} aria-label="行距选项"><Down /></Tool>
              <Divider $w={8} />
              <Tool aria-label="底纹"><BucketIcon /></Tool>
              <Tool $w={11} aria-label="底纹颜色"><Down /></Tool>
              <Tool $w={23} aria-label="边框"><BordersIcon /></Tool>
              <Tool $w={11} aria-label="边框选项"><Down /></Tool>
            </ToolRow>
          </GroupBody>
          <GroupFooter><span>段落</span><Launcher /></GroupFooter>
        </Group>

        <Group $w={677}>
          <GroupBody $top={6}>
            <Gallery>
              {styleCards.map((s) => (
                <StyleCard key={s.name} $selected={s.name === style} onClick={() => setStyle(s.name)}>
                  <Preview>
                    <Sample $font={s.font} $size={s.size} $bold={s.bold} $color={s.color}>{s.sample}</Sample>
                  </Preview>
                  {s.mark && <ReturnMark>↲</ReturnMark>}
                  {s.name}
                </StyleCard>
              ))}
              <GalleryScroll>
                <GalleryArrow disabled aria-label="上一行"><Icon w={5} h={3} stroke="none"><path d="M0 3h5L2.500 0z" fill="#b0b0b0" /></Icon></GalleryArrow>
                <GalleryArrow aria-label="下一行"><Down w={6} /></GalleryArrow>
                <GalleryArrow aria-label="其他"><Icon w={7} h={7}><path d="M0 0.500h7" /><path d="M0.500 3h6L3.500 6.500z" fill={GREY} stroke="none" /></Icon></GalleryArrow>
              </GalleryScroll>
            </Gallery>
          </GroupBody>
          <GroupFooter><span>样式</span><Launcher /></GroupFooter>
        </Group>

        <Group $w={75}>
          <CommandList>
            <Command><FindIcon />查找&nbsp;&nbsp;<Down /></Command>
            <Command><ReplaceIcon />替换</Command>
            <Command><SelectIcon />选择<Down /></Command>
          </CommandList>
          <GroupFooter><span>编辑</span></GroupFooter>
        </Group>

        <Group $w={51}>
          <GroupBody>
            <BigButton><TranslateIcon /><span>全文<br />翻译</span></BigButton>
          </GroupBody>
          <GroupFooter><span>翻译</span></GroupFooter>
        </Group>

        <Group $w={51}>
          <GroupBody>
            <BigButton><ThesisIcon /><span>论文<br />查重</span></BigButton>
          </GroupBody>
          <GroupFooter><span>论文</span></GroupFooter>
        </Group>

        <Collapse aria-label="折叠功能区">
          <Icon w={10} h={6} strokeWidth="2"><path d="M1 5.500l4-4 4 4" /></Icon>
        </Collapse>
      </Ribbon>

      <QuickBar>
        {quickItems.map((q) => (
          <QuickButton key={q.name} aria-label={q.name}>
            {q.icon}
            {q.menu && <Down w={6} />}
          </QuickButton>
        ))}
        <QuickButton aria-label="自定义快速访问工具栏"><Down w={6} color="#f7f7f7" /></QuickButton>
      </QuickBar>

      <Workspace>
        <NavPane>
          <NavHeader>
            <h2>导航</h2>
            <PlainButton aria-label="任务窗格选项"><Down w={10} /></PlainButton>
            <PlainButton aria-label="关闭导航"><Icon w={10} h={10} strokeWidth="2"><path d="M0.500 0.500l9 9M9.500 0.500l-9 9" /></Icon></PlainButton>
          </NavHeader>
          <SearchBox>
            <input placeholder="搜索文档" aria-label="搜索文档" />
            <PlainButton aria-label="搜索"><Magnifier /></PlainButton>
            <PlainButton aria-label="搜索选项"><Down w={6} /></PlainButton>
          </SearchBox>
          <NavTabs>
            <NavTab $active>标题</NavTab>
            <NavTab>页面</NavTab>
            <NavTab>结果</NavTab>
          </NavTabs>
          <JumpTop aria-label="跳转到开头">
            <Icon w={8} h={8}><path d="M0 1h8" /><path d="M0.500 7h7L4 2.500z" fill="#444444" stroke="none" /></Icon>
          </JumpTop>
          <Tree>
            {headings.map((h) => (
              <TreeItem key={h.text} $level={h.level}>
                {h.level < 3 ? (
                  <PlainButton>
                    <Icon w={7} h={7}><path d="M6.500 0v6.500H0z" fill="#444444" stroke="none" /></Icon>
                    {h.text}
                  </PlainButton>
                ) : (
                  <LeafButton $selected={h.text === heading} onClick={() => setHeading(h.text)}>{h.text}</LeafButton>
                )}
              </TreeItem>
            ))}
          </Tree>
        </NavPane>

        <SideRulerColumn>
          <TabSelector aria-label="制表符">
            <Icon w={8} h={8} strokeWidth="2"><path d="M1 0v7h7" /></Icon>
          </TabSelector>
          <SideRuler><Scale from={1.5} to={27} side /></SideRuler>
        </SideRulerColumn>

        <Canvas>
          <TopRuler>
            <Scale from={-3} to={17.75} />
            <IndentMarker>
              <Icon w={12} h={28} stroke="#8a8a8a">
                <path d="M0.500 0.500h10v4l-5 5-5-5zM5.500 9.500l5 5v5H0.500v-5zM0.500 20.500h10v6H0.500z" fill="#ffffff" />
              </Icon>
            </IndentMarker>
            <RightMarker>
              <Icon w={12} h={11} stroke="#8a8a8a"><path d="M5.500 0.500l5 5v4H0.500v-4z" fill="#ffffff" /></Icon>
            </RightMarker>
          </TopRuler>
          <Page>
            <PageBody>
              <Paragraph>
                使用在需要位置出现的新按钮在 <Red>Word</Red> 中保存时间。若要更改图片适应文<br />
                档的方式，请单击该图片，图片旁边将会显示布局选项按钮。当处理表格时，<br />
                单击要添加行或列的位置，然后单击加号。
              </Paragraph>
              <Paragraph>
                在新的阅读视图中阅读更加容易。可以折叠文档某些部分并关注所需文<br />
                本。如果在达到结尾处之前需要停止读取，<Red>Word</Red> 会记住您的停止位置{'  -  '}即使<br />
                在另一个设备上。<Red>Apple Watch{'\u3000'}App Store{'\u3000'}Apple Pay{'\u3000'}example</Red>
              </Paragraph>
              <Examples>
                {examples.map((n) => <li key={n}>{n} 举例内容</li>)}
              </Examples>
              <SymbolLine>
                <Symbols>
                  {['©', '®', '™', '§', '¶', '-', '–', '—'].map((s) => <span key={s}>{s}</span>)}
                </Symbols>
                <Symbols $wide>
                  {['€', '℃', '℅', '℉', '№', '※', '‰'].map((s) => <span key={s}>{s}</span>)}
                </Symbols>
              </SymbolLine>
              <Caret />
            </PageBody>
            <PageFooter>
              <CropMark />
              <PageNumber>—6—</PageNumber>
              <CropMark $right />
            </PageFooter>
          </Page>
          <Page $next />
          <MousePointer>
            <Icon w={24} h={22} stroke="#000000" shapeRendering="crispEdges">
              <path d="M0 3.500h3M4 3.500h3M3.500 4v15M0 19.500h3M4 19.500h3M13 0v4M11 1.500h4M16 3.500h5M11 5.500h10M11 7.500h10M11 9.500h8" />
            </Icon>
          </MousePointer>
        </Canvas>

        <ScrollBar>
          <ScrollArrow aria-label="向上滚动"><Icon w={7} h={4} stroke="none"><path d="M0.500 4h6L3.500 0z" fill={GREY} /></Icon></ScrollArrow>
          <ScrollThumb />
          <ScrollArrow aria-label="向下滚动"><Down /></ScrollArrow>
        </ScrollBar>
      </Workspace>

      <StatusBar>
        <StatusItems>
          <span>页面: 6</span>
          <span>节: 3</span>
          <span>第 6 页，共 13 页</span>
          <span>2710 个字</span>
          <span>中文(中国)</span>
          <span>修订: 关闭</span>
          <span>插入</span>
          <Icon w={13} h={13} shapeRendering="crispEdges">
            <path d="M1.500 6v6.500h11V2M3 7.500h8M3 9.500h8" />
            <path d="M6 1h7v3H6z" fill={GREY} stroke="none" />
            <circle cx="3" cy="3" r="3" fill={GREY} stroke="none" shapeRendering="auto" />
          </Icon>
        </StatusItems>
        <ViewButton aria-label="阅读视图">
          <Icon w={14} h={13}><path d="M6.500 2.500L4.500 1.500h-4v9h4l2 1 2-1h4v-9h-4zM6.500 2.500v9M2 4.500h3M2 6.500h3M2 8.500h3M8 4.500h3M8 6.500h3M8 8.500h3" /></Icon>
        </ViewButton>
        <ViewButton $active aria-label="页面视图">
          <Icon w={14} h={13} shapeRendering="crispEdges"><path d="M0.500 0.500h13v12H0.500zM2 3.500h10M2 5.500h10M2 7.500h10M2 9.500h10" /></Icon>
        </ViewButton>
        <ViewButton aria-label="Web 版式视图">
          <Icon w={14} h={13}>
            <path d="M5 10.500H0.500v-10h11V5M2 3.500h8M2 5.500h5M2 7.500h4" />
            <circle cx="9.500" cy="8.500" r="3.500" fill="#f1f1f1" />
            <path d="M8 6l3 1v4l-2-2z" fill={GREY} stroke="none" />
          </Icon>
        </ViewButton>
        <ZoomControls>
          <ZoomStep aria-label="缩小"><Icon w={7} h={7} strokeWidth="2"><path d="M0 4h7" /></Icon></ZoomStep>
          <ZoomSlider type="range" min="0" max="100" value={zoom} onChange={(e) => setZoom(e.target.value)} aria-label="显示比例" />
          <ZoomStep aria-label="放大"><Icon w={8} h={8} strokeWidth="2"><path d="M0 4h8M4 0v8" /></Icon></ZoomStep>
          <ZoomValue>80%</ZoomValue>
        </ZoomControls>
      </StatusBar>

      <ImeBadge>
        <span>CH</span>
        <Icon w={12} h={12} stroke="#222222"><path d="M5 1c4.500 0 6 2.500 6 4.500C11 9 7 11 1.500 10.500 5 9.500 7.500 5 5 1z" /></Icon>
        <span>简</span>
      </ImeBadge>

      <Watermark>
        <WatermarkGlow width="184" height="40" viewBox="0 0 184 40" fill="#ffffff" opacity="0.5">
          <path d="M14 2h22l12 16 22-14h14L54 24l12 15H46L38 28 10 40H0l32-20z" />
          <path d="M72 8h96v4H72z" />
        </WatermarkGlow>
        <Icon w={42} h={42} stroke="none">
          <path d="M38 3C20 0 0 14 2 28c1 5 8 5 13 4C5 27 16 8 38 3z" fill="#4f9bdc" />
          <path d="M36 10C22 10 12 18 14 24c2 5 12 4 16-1-5 2-10 2-10-1 0-4 8-8 18-8z" fill="#6fb0e6" />
          <path d="M40 14c6 12-8 27-34 25C24 36 34 28 34 18z" fill="#6fc04c" />
          <path d="M34 18c2 8-8 14-18 14 8-3 12-8 12-12z" fill="#a5d84e" />
        </Icon>
        <WatermarkText>极光下载站<small>www.xz7.com</small></WatermarkText>
      </Watermark>
    </Window>
  );
}

export default App;
